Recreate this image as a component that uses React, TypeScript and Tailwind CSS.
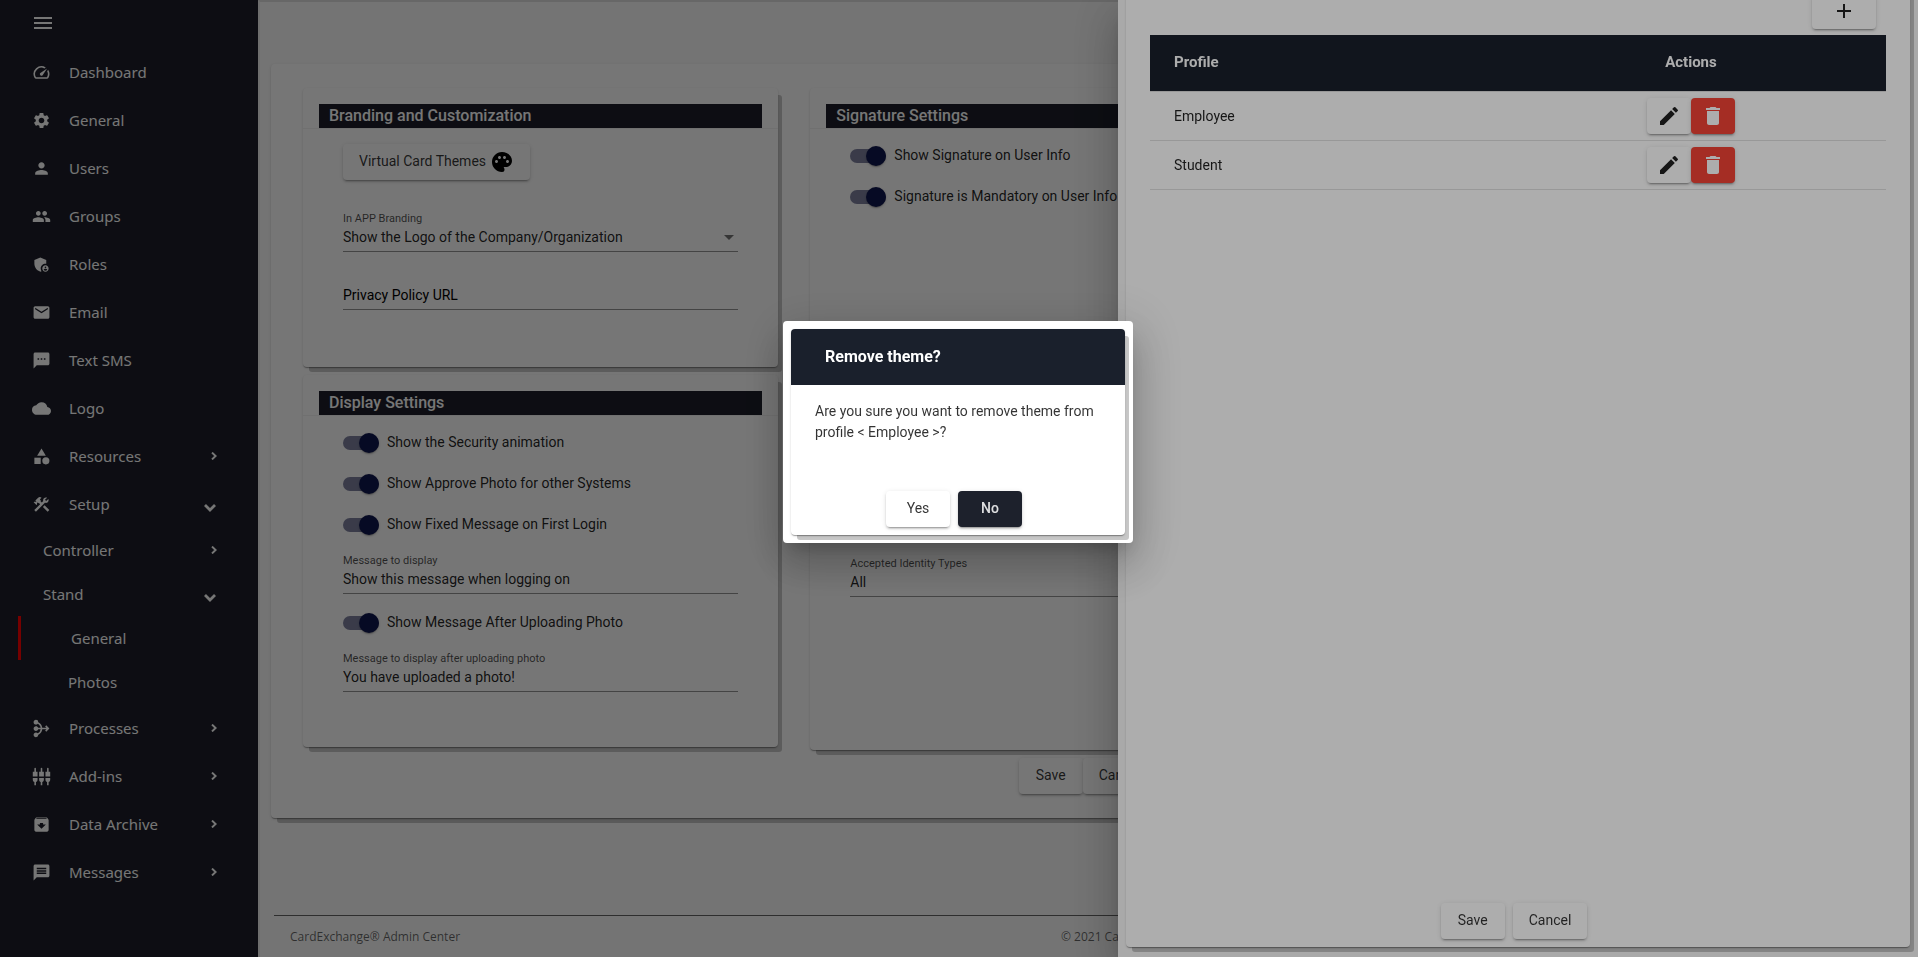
import { useState } from "react"
import type { ReactNode } from "react"
import type { IconType } from "react-icons"
import {
  MdAdd,
  MdAdminPanelSettings,
  MdArchive,
  MdCategory,
  MdCloud,
  MdConstruction,
  MdCreate,
  MdDelete,
  MdEmail,
  MdMediation,
  MdMenu,
  MdMessage,
  MdPalette,
  MdPeople,
  MdPerson,
  MdSettings,
  MdSettingsInputComponent,
  MdSpeed,
  MdTextsms,
} from "react-icons/md"

type NavEntry = {
  label: string
  icon?: IconType
  arrow?: "right" | "down"
  level?: 1 | 2
  active?: boolean
}

const navEntries: NavEntry[] = [
  { label: "Dashboard", icon: MdSpeed },
  { label: "General", icon: MdSettings },
  { label: "Users", icon: MdPerson },
  { label: "Groups", icon: MdPeople },
  { label: "Roles", icon: MdAdminPanelSettings },
  { label: "Email", icon: MdEmail },
  { label: "Text SMS", icon: MdTextsms },
  { label: "Logo", icon: MdCloud },
  { label: "Resources", icon: MdCategory, arrow: "right" },
  { label: "Setup", icon: MdConstruction, arrow: "down" },
  { label: "Controller", level: 1, arrow: "right" },
  { label: "Stand", level: 1, arrow: "down" },
  { label: "General", level: 2, active: true },
  { label: "Photos", level: 2 },
  { label: "Processes", icon: MdMediation, arrow: "right" },
  { label: "Add-ins", icon: MdSettingsInputComponent, arrow: "right" },
  { label: "Data Archive", icon: MdArchive, arrow: "right" },
  { label: "Messages", icon: MdMessage, arrow: "right" },
]

const profiles = ["Employee", "Student"]

const cardShadow =
  "shadow-[5px_6px_0_-1px_rgba(0,0,0,0.22),0_2px_1px_-1px_rgba(0,0,0,0.2),0_1px_1px_0_rgba(0,0,0,0.14),0_1px_3px_0_rgba(0,0,0,0.12)]"
const buttonShadow =
  "shadow-[0_3px_1px_-2px_rgba(0,0,0,0.2),0_2px_2px_0_rgba(0,0,0,0.14),0_1px_5px_0_rgba(0,0,0,0.12)]"
const overlayShadow =
  "shadow-[0_11px_15px_-7px_rgba(0,0,0,0.2),0_24px_38px_3px_rgba(0,0,0,0.14),0_9px_46px_8px_rgba(0,0,0,0.12)]"

function Arrow({ direction }: { direction: "right" | "down" }) {
  if (direction === "down") {
    return (
      <svg className="mt-2 mr-[42px] h-2 w-3" viewBox="0 0 12 8" fill="none" stroke="currentColor" strokeWidth="2.8">
        <path d="M1 1l5 5 5-5" />
      </svg>
    )
  }
  return (
    <svg className="mr-[41px] h-2 w-1.5" viewBox="0 0 6 8" fill="none" stroke="currentColor" strokeWidth="2">
      <path d="M1 0.6L4.6 4 1 7.4" />
    </svg>
  )
}

function NavItem({ entry }: { entry: NavEntry }) {
  const Icon = entry.icon
  let padding = "h-12 pl-8"
  if (entry.level === 1) padding = "h-11 pl-[43px]"
  if (entry.level === 2) padding = entry.active ? "ml-[18px] h-11 border-l-[3px] border-[#ff0000] pl-[50px]" : "h-11 pl-[68px]"

  return (
    <li>
      <a href="#" className={`flex items-center ${padding}`}>
        {Icon && <Icon className="mr-[18px] size-[19px]" />}
        <span className="flex-1 pt-0.5">{entry.label}</span>
        {entry.arrow && <Arrow direction={entry.arrow} />}
      </a>
    </li>
  )
}

function Card({ title, className = "", children }: { title?: string; className?: string; children: ReactNode }) {
  return (
    <section className={`rounded bg-white ${cardShadow} ${className}`}>
      <div className="border-b border-black/5 px-4 pt-4">
        <h2 className="h-6 bg-[#1c1e29] px-2.5 text-base leading-6 font-medium text-white">{title}</h2>
      </div>
      <div className="flex flex-col px-10">{children}</div>
    </section>
  )
}

function Toggle({ label }: { label: string }) {
  return (
    <label className="flex h-[41px] items-center gap-2">
      <input type="checkbox" defaultChecked className="peer sr-only" />
      <span className="flex h-3.5 w-9 items-center justify-end rounded-full bg-[#0f164e]/54">
        <span className="size-5 shrink-0 rounded-full bg-[#0f164e] shadow-[0_2px_1px_-1px_rgba(0,0,0,0.2),0_1px_3px_0_rgba(0,0,0,0.2)]" />
      </span>
      <span className="pb-0.5">{label}</span>
    </label>
  )
}

function TextField({ id, label, value, className = "" }: { id: string; label: string; value: string; className?: string }) {
  return (
    <div className={`border-b border-black/42 pb-1 ${className}`}>
      <label htmlFor={id} className="block pt-0.5 text-[11px] leading-4 text-black/70">
        {label}
      </label>
      <input id={id} type="text" defaultValue={value} className="block h-5 w-full bg-transparent outline-none" />
    </div>
  )
}

function FlatButton({ children, className = "", onClick }: { children: ReactNode; className?: string; onClick?: () => void }) {
  return (
    <button
      type="button"
      onClick={onClick}
      className={`flex h-9 min-w-16 items-center justify-center rounded px-4 pb-0.5 ${buttonShadow} ${className}`}
    >
      {children}
    </button>
  )
}

function Sidebar() {
  return (
    <nav className="flex w-[258px] shrink-0 flex-col bg-[#1c1e29] font-['Noto_Sans','Open_Sans',sans-serif] text-[15px] text-white">
      <div className="flex h-12 items-start pt-[11px] pl-[31px]">
        <button type="button" aria-label="Toggle menu">
          <MdMenu className="size-6" />
        </button>
      </div>
      <ul>
        {navEntries.map((entry, i) => (
          <NavItem key={i} entry={entry} />
        ))}
      </ul>
    </nav>
  )
}

function Settings() {
  return (
    <main className={`mx-[13px] mt-16 rounded bg-white pt-6 pb-6 ${cardShadow}`}>
      <div className="grid grid-cols-3 gap-x-8 gap-y-2 pr-28 pl-8">
        <Card title="Branding and Customization" className="pb-[57px]">
          <FlatButton className="mt-[15px] gap-1 self-start bg-white text-black/80">
            Virtual Card Themes
            <MdPalette className="mt-0.5 size-6 text-black" />
          </FlatButton>
          <div className="mt-[29px] border-b border-black/42 pb-1">
            <label htmlFor="branding" className="block pt-0.5 text-[11px] leading-4 text-black/70">
              In APP Branding
            </label>
            <div className="flex items-center">
              <select id="branding" className="h-5 flex-1 appearance-none bg-transparent outline-none">
                <option>Show the Logo of the Company/Organization</option>
              </select>
              <svg className="mr-1 h-[5px] w-2.5 text-black/54" viewBox="0 0 10 5" fill="currentColor">
                <path d="M0 0h10L5 5z" />
              </svg>
            </div>
          </div>
          <div className="mt-[15px] border-b border-black/42 pt-[18px] pb-1">
            <input
              type="text"
              aria-label="Privacy Policy URL"
              placeholder="Privacy Policy URL"
              className="block h-5 w-full bg-transparent outline-none placeholder:text-black"
            />
          </div>
        </Card>

        <Card title="Signature Settings">
          <div className="pt-1.5">
            <Toggle label="Show Signature on User Info" />
            <Toggle label="Signature is Mandatory on User Info" />
          </div>
        </Card>

        <Card title="Display Settings" className="col-start-1 self-start pb-[55px]">
          <div className="py-1.5">
            <Toggle label="Show the Security animation" />
            <Toggle label="Show Approve Photo for other Systems" />
            <Toggle label="Show Fixed Message on First Login" />
          </div>
          <TextField id="login-message" label="Message to display" value="Show this message when logging on" />
          <div className="pt-2 pb-1.5">
            <Toggle label="Show Message After Uploading Photo" />
          </div>
          <TextField id="photo-message" label="Message to display after uploading photo" value="You have uploaded a photo!" />
        </Card>

        <Card className="pb-[153px]">
          <TextField id="identity-types" label="Accepted Identity Types" value="All" className="mt-[138px]" />
        </Card>
      </div>

      <div className="mt-2 flex justify-center">
        <FlatButton className="bg-white text-black/80">Save</FlatButton>
        <FlatButton className="bg-white text-black/80">Cancel</FlatButton>
      </div>
    </main>
  )
}

function ThemeDrawer({ onRemove }: { onRemove: () => void }) {
  return (
    <aside className={`fixed inset-y-0 right-0 flex w-[800px] flex-col overflow-hidden bg-[#fafafa] px-2 pb-2.5 ${overlayShadow}`}>
      {/* scrolled down, so the top of the card is cut off */}
      <div className={`-mt-[23px] flex flex-1 flex-col rounded bg-white px-6 pt-4 pb-2 ${cardShadow}`}>
        <FlatButton className="mr-2.5 self-end bg-white">
          <MdAdd className="mt-0.5 size-6" aria-label="Add" />
        </FlatButton>
        <table className="mt-1.5 w-full table-fixed text-left">
          <thead>
            <tr className="h-14 border-b border-black/12 bg-[#1a202c] text-[15px] text-white">
              <th className="w-[47%] pl-6 font-bold">Profile</th>
              <th className="text-center font-bold">Actions</th>
            </tr>
          </thead>
          <tbody>
            {profiles.map((profile) => (
              <tr key={profile} className="h-[49px] border-b border-black/12">
                <td className="pl-6">{profile}</td>
                <td>
                  <div className="flex justify-center">
                    <button type="button" aria-label={`Edit ${profile}`} className={`flex h-9 w-11 items-center justify-center rounded bg-white ${buttonShadow}`}>
                      <MdCreate className="size-6" />
                    </button>
                    <button
                      type="button"
                      aria-label={`Delete ${profile}`}
                      onClick={onRemove}
                      className={`flex h-9 w-11 items-center justify-center rounded bg-[#f44336] text-white ${buttonShadow}`}
                    >
                      <MdDelete className="size-6" />
                    </button>
                  </div>
                </td>
              </tr>
            ))}
          </tbody>
        </table>
        <div className="mt-auto flex justify-center">
          <FlatButton className="mr-2 bg-white text-black/80">Save</FlatButton>
          <FlatButton className="mr-2 bg-white text-black/80">Cancel</FlatButton>
        </div>
      </div>
    </aside>
  )
}

function RemoveDialog({ onClose }: { onClose: () => void }) {
  return (
    <div className="fixed inset-0 flex items-center justify-center bg-black/32 pr-0.5 pb-[93px]">
      <div role="dialog" aria-labelledby="dialog-title" className={`w-[350px] rounded bg-white p-2 ${overlayShadow}`}>
        <div className={`rounded pb-2 ${cardShadow}`}>
          <h2 id="dialog-title" className="h-14 rounded-t bg-[#1a202c] pl-[34px] text-base leading-14 font-bold text-white">
            Remove theme?
          </h2>
          <p className="h-[106px] px-6 pt-4 leading-[21px] text-black/80">
            Are you sure you want to remove theme from profile &lt; Employee &gt;?
          </p>
          <div className="flex justify-center">
            <FlatButton onClick={onClose} className="mr-2 bg-white text-black/80">
              Yes
            </FlatButton>
            <FlatButton onClick={onClose} className="mr-2 bg-[#1d212c] font-medium text-white/85">
              No
            </FlatButton>
          </div>
        </div>
      </div>
    </div>
  )
}

export default function App() {
  const [dialogOpen, setDialogOpen] = useState(true)

  return (
    <div className="flex h-screen overflow-hidden bg-[#fafafa] font-[Roboto,sans-serif] text-sm text-black/87">
      <Sidebar />
      <div className="flex flex-1 flex-col border-t-2 border-l-2 border-t-black/10 border-l-black/5">
        <div className="-mt-0.5 -ml-0.5 flex flex-1 flex-col">
          <Settings />
          <footer className="mt-auto ml-4 grid h-[42px] grid-cols-[22fr_24fr] items-center border-t border-black/60 px-4 font-['Open_Sans','Noto_Sans',sans-serif] text-xs text-black/60">
            <span>CardExchange® Admin Center</span>
            <span>© 2021 CardExchange</span>
          </footer>
        </div>
      </div>

      <div className="fixed inset-0 bg-black/32" />
      <ThemeDrawer onRemove={() => setDialogOpen(true)} />
      {dialogOpen && <RemoveDialog onClose={() => setDialogOpen(false)} />}
    </div>
  )
}
